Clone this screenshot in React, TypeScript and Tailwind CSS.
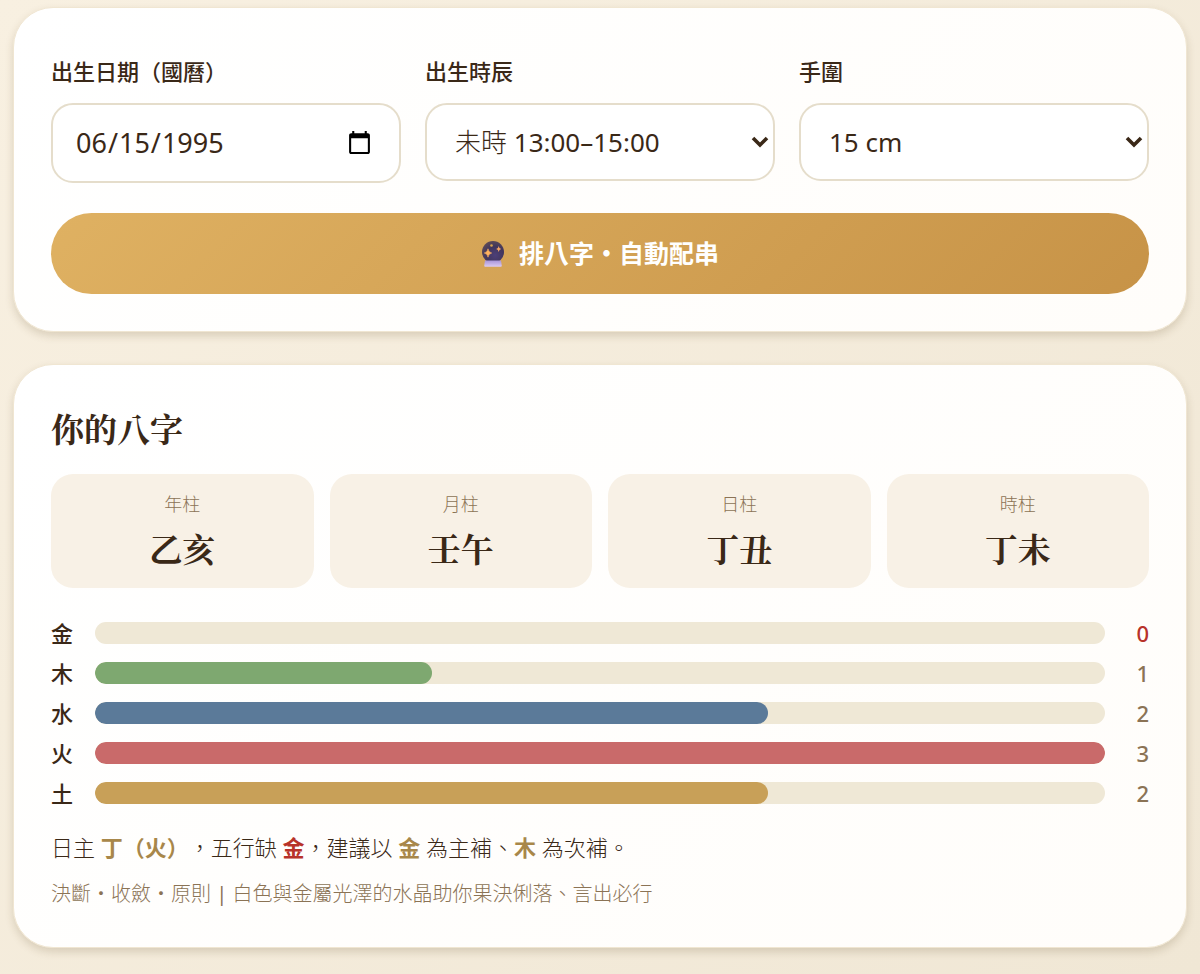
import { useState } from 'react';
import type { ReactNode } from 'react';

interface Pillar {
  label: string;
  value: string;
}

interface ElementCount {
  name: string;
  count: number;
  fill: string;
}

const PILLARS: Pillar[] = [
  { label: '年柱', value: '乙亥' },
  { label: '月柱', value: '壬午' },
  { label: '日柱', value: '丁丑' },
  { label: '時柱', value: '丁未' },
];

const ELEMENTS: ElementCount[] = [
  { name: '金', count: 0, fill: 'bg-[#c9c3b4]' },
  { name: '木', count: 1, fill: 'bg-[#7ea870]' },
  { name: '水', count: 2, fill: 'bg-[#5b7a99]' },
  { name: '火', count: 3, fill: 'bg-[#c96a6a]' },
  { name: '土', count: 2, fill: 'bg-[#c8a058]' },
];

const HOURS = [
  '子時 23:00–01:00',
  '丑時 01:00–03:00',
  '寅時 03:00–05:00',
  '卯時 05:00–07:00',
  '辰時 07:00–09:00',
  '巳時 09:00–11:00',
  '午時 11:00–13:00',
  '未時 13:00–15:00',
  '申時 15:00–17:00',
  '酉時 17:00–19:00',
  '戌時 19:00–21:00',
  '亥時 21:00–23:00',
];

const WRISTS = ['13 cm', '14 cm', '15 cm', '16 cm', '17 cm', '18 cm'];

function Card({ children }: { children: ReactNode }) {
  return (
    <section className="rounded-[40px] border border-[#f0e6d2] bg-linear-135 from-white to-[#fffdfa] px-[37px] pb-[37px] shadow-[0_4px_8px_rgba(90,65,30,0.18)]">
      {children}
    </section>
  );
}

interface SelectFieldProps {
  id: string;
  label: string;
  options: string[];
  value: string;
  onChange: (value: string) => void;
}

function SelectField({ id, label, options, value, onChange }: SelectFieldProps) {
  return (
    <div className="min-w-0">
      <label htmlFor={id} className="mb-4 block text-[22px] leading-8 font-medium">
        {label}
      </label>
      <div className="relative">
        <select
          id={id}
          value={value}
          onChange={(e) => onChange(e.target.value)}
          className="h-[78px] w-full appearance-none rounded-[22px] border-2 border-[#e5ddcb] bg-white pr-10 pl-7 font-['Noto_Sans','Noto_Sans_CJK_TC_Light','Noto_Sans_CJK_TC',sans-serif] text-[26px] font-normal outline-none"
        >
          {options.map((o) => (
            <option key={o}>{o}</option>
          ))}
        </select>
        <svg
          viewBox="0 0 18 12"
          className="pointer-events-none absolute top-1/2 right-1.5 h-3 w-[18px] -translate-y-1/2"
          fill="none"
          stroke="currentColor"
          strokeWidth="3.6"
        >
          <path d="M2 2l7 7 7-7" />
        </svg>
      </div>
    </div>
  );
}

function CrystalBall() {
  return (
    <svg viewBox="0 0 24 28" className="h-7 w-6" aria-hidden="true">
      <defs>
        <radialGradient id="ball" cx="0.6" cy="0.65" r="0.65">
          <stop offset="0" stopColor="#4d3f78" />
          <stop offset="0.6" stopColor="#41365c" />
          <stop offset="1" stopColor="#5a4856" />
        </radialGradient>
        <linearGradient id="base" x1="0" y1="0" x2="0" y2="1">
          <stop offset="0" stopColor="#a894d8" />
          <stop offset="1" stopColor="#dccbf2" />
        </linearGradient>
      </defs>
      <circle cx="12" cy="12" r="11" fill="url(#ball)" />
      <path d="M4 20.500h16l.8 5.300q0 1-1 1H4.200q-1 0-1-1z" fill="url(#base)" />
      <path d="M7 8.800q.5 3.600 3.700 4.200-3.200.6-3.700 4.200-.5-3.600-3.700-4.200 3.200-.6 3.700-4.200z" fill="#ffb25e" stroke="#ffb25e" strokeWidth="0.600" />
      <path d="M17.700 6q.3 2.600 2.500 3-2.200.4-2.500 3-.3-2.600-2.500-3 2.200-.4 2.500-3z" fill="#f7a765" />
      <circle cx="10.500" cy="5.500" r="1.300" fill="#d8a24e" />
    </svg>
  );
}

export default function App() {
  const [date, setDate] = useState('1995-06-15');
  const [hour, setHour] = useState('未時 13:00–15:00');
  const [wrist, setWrist] = useState('15 cm');
  const max = Math.max(...ELEMENTS.map((e) => e.count));

  return (
    <main
      lang="zh-Hant"
      className="flex min-h-screen flex-col gap-8 bg-linear-135 from-[#f8f0e1] to-[#f0e7d5] px-[13px] pt-[7px] pb-[26px] font-['Noto_Sans','Noto_Sans_CJK_TC',sans-serif] text-[#3a2817] [text-spacing-trim:space-all]"
    >
      <Card>
        <form className="pt-[47px]" onSubmit={(e) => e.preventDefault()}>
          <div className="grid grid-cols-3 gap-6">
            <div className="min-w-0">
              <label htmlFor="birth-date" className="mb-4 block text-[22px] leading-8 font-medium">
                出生日期（國曆）
              </label>
              <input
                id="birth-date"
                type="date"
                value={date}
                onChange={(e) => setDate(e.target.value)}
                className="h-20 w-full rounded-[22px] border-2 border-[#e5ddcb] bg-white pr-6 pl-[22px] text-[27px] font-normal outline-none"
              />
            </div>
            <SelectField id="birth-hour" label="出生時辰" options={HOURS} value={hour} onChange={setHour} />
            <SelectField id="wrist" label="手圍" options={WRISTS} value={wrist} onChange={setWrist} />
          </div>
          <button
            type="submit"
            className="mt-[30px] flex h-[81px] w-full items-center justify-center gap-3.5 rounded-full bg-linear-135 from-[#dfb162] to-[#c79347] text-[25px] font-bold text-white"
          >
            <CrystalBall />
            排八字・自動配串
          </button>
        </form>
      </Card>

      <Card>
        <h2 className="pt-[39px] text-[33px] leading-12 font-bold font-['Noto_Serif_CJK_TC','Liberation_Serif','Noto_Sans_CJK_TC',serif]">
          你的八字
        </h2>
        <div className="mt-[22px] grid grid-cols-4 gap-4">
          {PILLARS.map((p) => (
            <div key={p.label} className="rounded-[22px] bg-[#f8f1e6] pt-4 pb-4 text-center">
              <div className="text-lg leading-7 font-light text-[#8b7355]">{p.label}</div>
              <div className="mt-1.5 text-[33px] leading-12 font-bold font-['Noto_Serif_CJK_TC','Liberation_Serif','Noto_Sans_CJK_TC',serif]">
                {p.value}
              </div>
            </div>
          ))}
        </div>

        <div className="mt-[25px] flex flex-col">
          {ELEMENTS.map((e) => (
            <div key={e.name} className="flex h-10 items-center gap-[22px]">
              <span className="w-[22px] text-[22px] leading-10 font-medium">{e.name}</span>
              <div className="h-[22px] flex-1 overflow-hidden rounded-full bg-[#efe8d6]">
                <div className={`h-full rounded-full ${e.fill}`} style={{ width: `${(e.count / max) * 100}%` }} />
              </div>
              <span
                className={`w-[22px] text-right text-[22px] leading-10 font-medium ${e.count === 0 ? 'text-[#b8322a]' : 'text-[#8b7355]'}`}
              >
                {e.count}
              </span>
            </div>
          ))}
        </div>

        <p className="mt-3.5 text-[22px] leading-10 font-light">
          日主 <b className="font-bold text-[#a8874a]">丁（火）</b>，五行缺{' '}
          <b className="font-bold text-[#b8322a]">金</b>，建議以 <b className="font-bold text-[#a8874a]">金</b>{' '}
          為主補、<b className="font-bold text-[#a8874a]">木</b> 為次補。
        </p>
        <p className="mt-[11px] text-xl leading-8 font-light text-[#8b7355]">
          決斷・收斂・原則 <span className="font-normal">|</span> 白色與金屬光澤的水晶助你果決俐落、言出必行
        </p>
      </Card>
    </main>
  );
}
